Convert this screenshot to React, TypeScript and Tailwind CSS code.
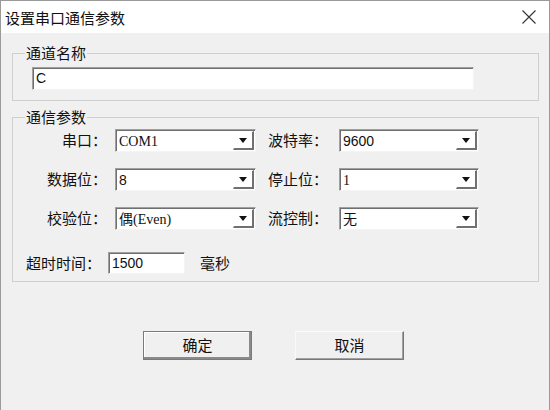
import React from 'react';

// ============================================
// Small pieces
// ============================================

const cjk = "font-['Noto_Sans_CJK_SC','Noto_Sans',sans-serif]";

const sunken =
  'border border-t-[#a0a0a0] border-l-[#a0a0a0] border-r-[#f4f4f4] border-b-[#f4f4f4] shadow-[inset_1px_1px_0_#6f6f6f] bg-white';

interface ComboProps {
  value: string;
  width: string;
  serif?: boolean;
}

const Combo: React.FC<ComboProps> = ({ value, width, serif }) => (
  <div className={`${width} h-[23px] flex items-stretch ${sunken}`}>
    <span
      className={`flex-1 flex items-center pl-[3px] pt-[1px] text-[14px] text-[#111] ${
        serif ? "font-['Liberation_Serif','Noto_Sans_CJK_SC',serif]" : "font-['Liberation_Sans','Noto_Sans_CJK_SC',sans-serif]"
      }`}
    >
      {value}
    </span>
    <span className="w-[21px] my-[1px] mr-[1px] bg-white border-r-2 border-b-2 border-r-[#707070] border-b-[#707070] border-l border-t border-l-white border-t-white flex items-center justify-center">
      <svg width="8" height="5" viewBox="0 0 8 5">
        <path d="M0 0 H8 L4 5 Z" fill="#111" />
      </svg>
    </span>
  </div>
);

interface DlgButtonProps {
  label: string;
  isDefault?: boolean;
}

const DlgButton: React.FC<DlgButtonProps> = ({ label, isDefault }) => (
  <button
    type="button"
    className={`w-[109px] h-[29px] bg-[#f0f0f0] flex items-center justify-center text-[15px] text-[#111] ${cjk} ${
      isDefault
        ? 'border border-[#7a7a7a] shadow-[inset_-2px_-2px_0_#8a8a8a,inset_1px_1px_0_#fff]'
        : 'border border-t-[#fafafa] border-l-[#fafafa] border-r-[#777] border-b-[#777] shadow-[inset_-1px_-1px_0_#a0a0a0]'
    }`}
  >
    {label}
  </button>
);

// ============================================
// Dialog
// ============================================

const rows: { l1: string; v1: string; s1?: boolean; l2: string; v2: string; s2?: boolean }[] = [
  { l1: '串口：', v1: 'COM1', s1: true, l2: '波特率：', v2: '9600' },
  { l1: '数据位：', v1: '8', l2: '停止位：', v2: '1', s2: true },
  { l1: '校验位：', v1: '偶(Even)', s1: true, l2: '流控制：', v2: '无', s2: true },
];

export default function App() {
  return (
    <div className={`w-[550px] h-[410px] bg-[#f0f0f0] border-x border-t border-[#9a9a9a] overflow-hidden ${cjk}`}>
      {/* Title bar */}
      <div className="h-[32px] bg-white flex items-center justify-between pl-[4px] pr-[13px]">
        <span className="text-[15px] text-[#111] leading-none">设置串口通信参数</span>
        <svg width="14" height="14" viewBox="0 0 14 14">
          <path d="M0.5 0.5 L13.5 13.5 M13.5 0.5 L0.5 13.5" stroke="#333" strokeWidth="1.1" />
        </svg>
      </div>

      <div className="pt-[12px] pl-[11px]">
        {/* 通道名称 */}
        <fieldset className="w-[527px] border border-[#cfcfcf] pb-[10px]">
          <legend className="ml-[12px] px-[1px] text-[15px] leading-[16px] text-[#111]">通道名称</legend>
          <div className={`ml-[19px] mt-[6px] w-[442px] h-[23px] flex items-center pl-[3px] text-[14px] font-['Liberation_Sans',sans-serif] text-[#111] ${sunken}`}>
            C
          </div>
        </fieldset>

        {/* 通信参数 */}
        <fieldset className="mt-[8px] w-[527px] border border-[#cfcfcf] pb-[7px] text-[15px] text-[#111]">
          <legend className="ml-[12px] px-[1px] leading-[16px]">通信参数</legend>
          <div className="mt-[4px] flex flex-col gap-[16px]">
            {rows.map((r) => (
              <div key={r.l1} className="flex items-center h-[23px]">
                <span className="w-[102px] text-right pr-[8px]">{r.l1}</span>
                <Combo value={r.v1} width="w-[141px]" serif={r.s1} />
                <span className="w-[83px] pl-[12px]">{r.l2}</span>
                <Combo value={r.v2} width="w-[140px]" serif={r.s2} />
              </div>
            ))}
          </div>
          <div className="mt-[22px] flex items-center h-[22px]">
            <span className="w-[95px] pl-[13px]">超时时间：</span>
            <div className={`w-[77px] h-[22px] flex items-center pl-[3px] text-[14px] font-['Liberation_Sans',sans-serif] ${sunken}`}>
              1500
            </div>
            <span className="ml-[15px]">毫秒</span>
          </div>
        </fieldset>

        {/* Buttons */}
        <div className="mt-[49px] pl-[131px] flex gap-[43px]">
          <DlgButton label="确定" isDefault />
          <DlgButton label="取消" />
        </div>
      </div>
    </div>
  );
}
